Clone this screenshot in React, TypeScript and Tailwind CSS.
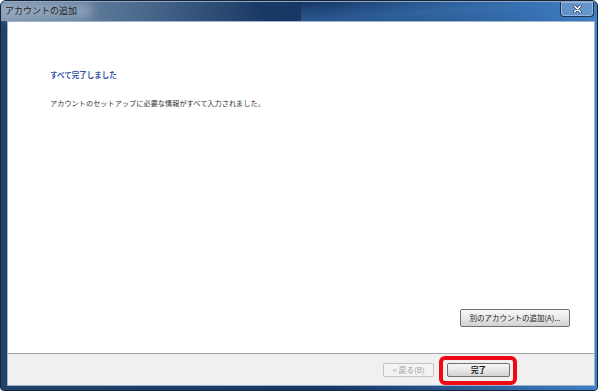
import React from "react";

const jp = { fontFamily: '"Noto Sans CJK JP", "Noto Sans", sans-serif' };

const WinButton = ({
  children,
  disabled = false,
  className = "",
}: {
  children: React.ReactNode;
  disabled?: boolean;
  className?: string;
}) => (
  <button
    disabled={disabled}
    className={`flex items-center justify-center rounded-[2px] border leading-none ${
      disabled
        ? "border-[#c4c4c4] bg-[#f4f4f4] text-[#a2a2a2]"
        : "border-[#707070] bg-linear-to-b from-[#f7f7f7] via-[#e8e8e8] to-[#d2d2d2] text-[#1a1a1a]"
    } ${className}`}
    style={jp}
  >
    {children}
  </button>
);

export default function App() {
  return (
    <div className="w-[600px] h-[392px] bg-white text-[9px] leading-[12px]" style={jp}>
      <div className="relative w-[598px] h-[391px] flex flex-col rounded-t-[6px] rounded-b-[4px] border border-[#14243a] bg-[#24497a] overflow-hidden">
        {/* frame colouring */}
        <div className="absolute inset-0 bg-linear-to-r from-[#22426a] via-[#173664] via-55% to-[#3f80c6]" />
        <div className="absolute left-0 top-0 w-[260px] h-[20px] bg-linear-to-r from-[#7d94ad] via-[#4f6d90] to-transparent" />
        <div className="absolute left-[300px] top-0 w-[298px] h-[20px] bg-linear-to-br from-transparent via-[#3d79bb]/50 to-transparent" />
        {/* title bar */}
        <div className="relative h-[20px] flex items-start justify-between shrink-0 border-t border-t-[#8fa6c0]">
          <div className="relative pl-[4px] pt-[3px]">
            <div className="absolute -left-[4px] top-[1px] w-[96px] h-[16px] rounded-full bg-[#b9c8d8]/45 blur-[5px]" />
            <span className="relative block text-[9px] leading-[12px] text-[#262626]">アカウントの追加</span>
          </div>
          <div className="mr-[3px] w-[34px] h-[15px] rounded-b-[4px] border border-t-0 border-[#1e3556] bg-white/20 shadow-[inset_0_0_0_1px_rgba(255,255,255,0.3)] flex items-center justify-center">
            <svg width="9" height="8" viewBox="0 0 9 8">
              <path d="M1.5 1 L7.5 7 M7.5 1 L1.5 7" stroke="#2a3a50" strokeWidth="3" strokeLinecap="round" />
              <path d="M1.5 1 L7.5 7 M7.5 1 L1.5 7" stroke="#ffffff" strokeWidth="1.6" strokeLinecap="round" />
            </svg>
          </div>
        </div>

        {/* client area */}
        <div className="relative flex-1 ml-[6px] mr-[2px] mb-[4px] flex flex-col border border-[#9eb4cc]">
          <div className="flex-1 bg-white flex flex-col pl-[42px] pr-[24px] pt-[48px] pb-[26px]">
            <div className="text-[7.5px] leading-[10px] font-bold text-[#3553a6]">すべて完了しました</div>
            <div className="mt-[18px] text-[7.2px] leading-[10px] text-[#333333]">
              アカウントのセットアップに必要な情報がすべて入力されました。
            </div>
            <div className="mt-auto self-end">
              <WinButton className="w-[110px] h-[18px] text-[7.5px]">別のアカウントの追加(A)...</WinButton>
            </div>
          </div>
          <div className="h-px bg-[#a5a5a5]" />
          <div className="h-[31px] bg-[#f0f0f0] flex items-center justify-end pr-[84px] gap-[13px]">
            <WinButton disabled className="w-[51px] h-[14px] text-[7.8px]">&lt; 戻る(B)</WinButton>
            <div className="relative">
              <WinButton className="w-[63px] h-[14px] text-[7.5px] font-bold">完了</WinButton>
              <div className="absolute -left-[8px] -right-[7px] -top-[7px] -bottom-[8px] rounded-[6px] border-[4px] border-[#ee0a14]" />
            </div>
          </div>
        </div>
      </div>
    </div>
  );
}
